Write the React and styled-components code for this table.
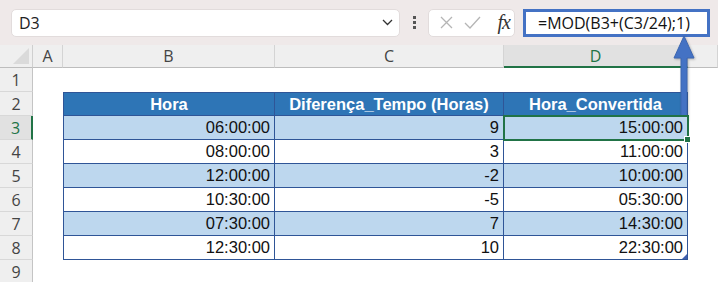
import React from "react"
import styled, { createGlobalStyle, css } from "styled-components"

const GlobalStyle = createGlobalStyle`
    html, body {
        margin: 0;
        padding: 0;
        background: #ffffff;
    }
    body {
        width: 718px;
        height: 282px;
        overflow: hidden;
        font-family: "Open Sans", "Liberation Sans", sans-serif;
    }
`

const Window = styled.div`
    position: relative;
    width: 718px;
    height: 282px;
    overflow: hidden;
    background: #ffffff;
`

const FormulaBar = styled.div`
    height: 45px;
    display: flex;
    align-items: center;
    padding-left: 11px;
    box-sizing: border-box;
    background: #efe9e9;
`

const NameBox = styled.div`
    width: 389px;
    height: 28px;
    box-sizing: border-box;
    display: flex;
    align-items: center;
    justify-content: space-between;
    padding: 0 6px 0 7px;
    background: #ffffff;
    border: 1px solid #e2dcdc;
    border-radius: 5px;
    font-size: 16px;
    color: #222;
`

const Dots = styled.div`
    width: 28px;
    display: flex;
    flex-direction: column;
    align-items: center;
    gap: 2px;

    span {
        width: 3px;
        height: 3px;
        background: #555;
    }
`

const IconBox = styled.div`
    width: 87px;
    height: 28px;
    box-sizing: border-box;
    display: flex;
    align-items: center;
    padding: 0 4px 0 11px;
    gap: 11px;
    background: #ffffff;
    border: 1px solid #e2dcdc;
    border-radius: 5px;
`

const Fx = styled.span`
    margin-left: auto;
    font-family: "Liberation Serif", serif;
    font-style: italic;
    font-size: 20px;
    color: #333;
    letter-spacing: -1px;
`

const FormulaInput = styled.div`
    width: 187px;
    height: 28px;
    margin-left: 8px;
    box-sizing: border-box;
    border: 3px solid #4472c4;
    background: #ffffff;
    display: flex;
    align-items: center;
    padding-left: 12px;
    font-size: 16px;
    color: #111;
    white-space: nowrap;
`

const Grid = styled.div`
    display: grid;
    grid-template-columns: 33px 30px 212px 229px 184px 1fr;
    grid-template-rows: 23px;
    grid-auto-rows: 24px;
`

const Corner = styled.div`
    background: #efefef;
    border-right: 1px solid #cfcfcf;
    border-bottom: 1px solid #bdbdbd;
    position: relative;

    &::after {
        content: "";
        position: absolute;
        right: 3px;
        bottom: 3px;
        border-left: 16px solid transparent;
        border-bottom: 16px solid #dadada;
    }
`

const ColHead = styled.div`
    display: flex;
    align-items: center;
    justify-content: center;
    box-sizing: border-box;
    background: ${(p) => (p.selected ? "#e1e1e1" : "#efefef")};
    border-right: 1px solid #d4d4d4;
    border-bottom: ${(p) => (p.selected ? "2px solid #217346" : "1px solid #bdbdbd")};
    color: ${(p) => (p.selected ? "#217346" : "#444")};
    font-size: 16px;
`

const RowHead = styled.div`
    display: flex;
    align-items: center;
    justify-content: center;
    box-sizing: border-box;
    background: ${(p) => (p.selected ? "#e1e1e1" : "#efefef")};
    border-bottom: 1px solid #d8d8d8;
    border-right: ${(p) => (p.selected ? "2px solid #217346" : "1px solid #c4c4c4")};
    color: ${(p) => (p.selected ? "#217346" : "#444")};
    font-size: 16px;
`

const Blank = styled.div`
    background: #ffffff;
`

const Cell = styled.div`
    position: relative;
    display: flex;
    align-items: center;
    box-sizing: border-box;
    padding: 0 4px;
    font-family: "Liberation Sans", Arial, sans-serif;
    font-size: 16.5px;
    color: #111;
    justify-content: flex-end;
    background: ${(p) => (p.band ? "#bdd7ee" : "#ffffff")};
    border-right: 1px solid #2f5597;
    border-bottom: 1px solid #2f5597;
    ${(p) => p.first && css`border-left: 1px solid #2f5597;`}

    ${(p) =>
        p.header &&
        css`
            justify-content: center;
            background: #2e75b6;
            color: #ffffff;
            font-weight: 700;
            border-top: 1px solid #2f5597;
        `}

    ${(p) =>
        p.active &&
        css`
            outline: 2px solid #217346;
            outline-offset: -1px;
            z-index: 1;

            &::after {
                content: "";
                position: absolute;
                right: -4px;
                bottom: -4px;
                width: 5px;
                height: 5px;
                background: #217346;
                border: 1px solid #ffffff;
            }
        `}

    ${(p) =>
        p.last &&
        css`
            &::after {
                content: "";
                position: absolute;
                right: 0;
                bottom: 0;
                border-left: 5px solid transparent;
                border-bottom: 5px solid #3f5fae;
            }
        `}
`

const Arrow = styled.svg`
    position: absolute;
    left: 668px;
    top: 34px;
    overflow: visible;
    filter: drop-shadow(1px 1px 1px rgba(0, 0, 0, 0.25));
`

const rows = [
    ["06:00:00", "9", "15:00:00"],
    ["08:00:00", "3", "11:00:00"],
    ["12:00:00", "-2", "10:00:00"],
    ["10:30:00", "-5", "05:30:00"],
    ["07:30:00", "7", "14:30:00"],
    ["12:30:00", "10", "22:30:00"],
]

const Cross = () => (
    <svg width="13" height="13" viewBox="0 0 13 13">
        <path d="M1 1L12 12M12 1L1 12" stroke="#b5b5b5" strokeWidth="1.3" fill="none" />
    </svg>
)

const Check = () => (
    <svg width="17" height="13" viewBox="0 0 17 13">
        <path d="M1 7L6 12L16 1" stroke="#b5b5b5" strokeWidth="1.3" fill="none" />
    </svg>
)

const Chevron = () => (
    <svg width="11" height="7" viewBox="0 0 11 7">
        <path d="M1 1L5.5 5.5L10 1" stroke="#333" strokeWidth="1.3" fill="none" />
    </svg>
)

const App = () => {
    return (
        <Window>
            <GlobalStyle />
            <FormulaBar>
                <NameBox>
                    <span>D3</span>
                    <Chevron />
                </NameBox>
                <Dots>
                    <span />
                    <span />
                    <span />
                </Dots>
                <IconBox>
                    <Cross />
                    <Check />
                    <Fx>fx</Fx>
                </IconBox>
                <FormulaInput>=MOD(B3+(C3/24);1)</FormulaInput>
            </FormulaBar>

            <Grid>
                <Corner />
                <ColHead>A</ColHead>
                <ColHead>B</ColHead>
                <ColHead>C</ColHead>
                <ColHead selected>D</ColHead>
                <ColHead />

                <RowHead>1</RowHead>
                <Blank />
                <Blank />
                <Blank />
                <Blank />
                <Blank />

                <RowHead>2</RowHead>
                <Blank />
                <Cell header first>Hora</Cell>
                <Cell header>Diferença_Tempo (Horas)</Cell>
                <Cell header>Hora_Convertida</Cell>
                <Blank />

                {rows.map((r, i) => (
                    <React.Fragment key={i}>
                        <RowHead selected={i === 0}>{i + 3}</RowHead>
                        <Blank />
                        <Cell first band={i % 2 === 0}>{r[0]}</Cell>
                        <Cell band={i % 2 === 0}>{r[1]}</Cell>
                        <Cell band={i % 2 === 0} active={i === 0} last={i === rows.length - 1}>
                            {r[2]}
                        </Cell>
                        <Blank />
                    </React.Fragment>
                ))}

                <RowHead>9</RowHead>
            </Grid>

            <Arrow width="32" height="90" viewBox="0 0 32 90">
                <path d="M16 2L26 24H19V86H13V24H6Z" fill="#4472c4" stroke="#3d66b0" strokeWidth="1" />
            </Arrow>
        </Window>
    )
}

export default App
